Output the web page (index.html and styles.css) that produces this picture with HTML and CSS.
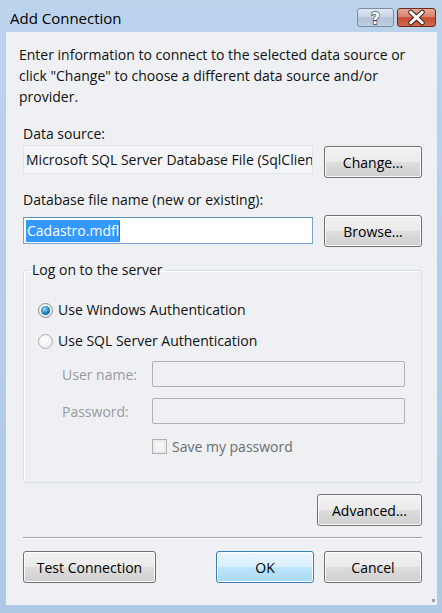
FILE: index.html
```html
<!DOCTYPE html>
<html>
<head>
<meta charset="utf-8">
<link rel="stylesheet" href="styles.css">
</head>
<body>
<div class="window">
  <div class="titlebar">
    <span class="title">Add Connection</span>
    <div class="caption-btns">
      <div class="cbtn help">
        <svg width="36" height="18" viewBox="0 0 36 18">
          <text x="18" y="15" text-anchor="middle" class="qmark">?</text>
        </svg>
      </div>
      <div class="cbtn close">
        <svg width="38" height="19" viewBox="0 0 38 19">
          <path d="M13 4 L25 15 M25 4 L13 15" stroke="#3b1a14" stroke-width="5" stroke-linecap="round"/>
          <path d="M13 4 L25 15 M25 4 L13 15" stroke="#ffffff" stroke-width="3" stroke-linecap="round"/>
        </svg>
      </div>
    </div>
  </div>
  <div class="client">
    <p class="intro">Enter information to connect to the selected data source or click "Change" to choose a different data source and/or provider.</p>
    <div class="label">Data source:</div>
    <div class="row">
      <div class="field readonly">Microsoft SQL Server Database File (SqlClient)</div>
      <button class="btn">Change...</button>
    </div>
    <div class="label label2">Database file name (new or existing):</div>
    <div class="row row2">
      <div class="field active"><span class="sel">Cadastro.mdfl</span><span class="caret"></span></div>
      <button class="btn">Browse...</button>
    </div>
    <fieldset class="group">
      <legend>Log on to the server</legend>
      <div class="radio-row">
        <span class="radio checked"><span class="dot"></span></span>
        <span>Use Windows Authentication</span>
      </div>
      <div class="radio-row second">
        <span class="radio"></span>
        <span>Use SQL Server Authentication</span>
      </div>
      <div class="cred-row">
        <span class="cred-label">User name:</span>
        <div class="cred-field"></div>
      </div>
      <div class="cred-row">
        <span class="cred-label">Password:</span>
        <div class="cred-field"></div>
      </div>
      <div class="check-row">
        <span class="checkbox"></span>
        <span>Save my password</span>
      </div>
    </fieldset>
    <div class="adv-row">
      <button class="btn adv">Advanced...</button>
    </div>
    <div class="separator"></div>
    <div class="footer">
      <button class="btn test">Test Connection</button>
      <div class="footer-right">
        <button class="btn ok">OK</button>
        <button class="btn">Cancel</button>
      </div>
    </div>
    <span class="grip"></span>
  </div>
</div>
</body>
</html>
```

FILE: styles.css
```css
html, body {
  margin: 0;
  padding: 0;
}
body {
  background: #b7cde9;
  font-family: "Open Sans", "Noto Sans", sans-serif;
  font-size: 14px;
  color: #111;
}
.window {
  width: 442px;
  height: 613px;
  background: linear-gradient(#bcd3ec, #afc8e6);
}
.titlebar {
  height: 32px;
  display: flex;
  align-items: flex-start;
  justify-content: space-between;
}
.title {
  font-size: 15px;
  margin: 8px 0 0 10px;
  line-height: 20px;
  color: #000;
}
.caption-btns {
  display: flex;
  gap: 3px;
  margin: 8px 6px 0 0;
}
.cbtn {
  height: 19px;
  border: 1px solid #5f6f86;
  border-radius: 3px;
  box-sizing: border-box;
  display: flex;
  align-items: center;
  justify-content: center;
}
.cbtn svg { display: block; }
.help {
  width: 37px;
  background: linear-gradient(#dfe7f1 0%, #c6d3e4 48%, #b1c1d8 52%, #bfd0e6 100%);
  border-color: #7a8ba3;
}
.qmark {
  font-family: "DejaVu Sans", sans-serif;
  font-weight: bold;
  font-size: 16px;
  fill: #ffffff;
  stroke: #3d4a5e;
  stroke-width: 1.4;
  paint-order: stroke;
}
.close {
  width: 39px;
  background: linear-gradient(#e8a897 0%, #d7826f 45%, #c54c33 52%, #d0684c 100%);
  border-color: #6d2b20;
}
.client {
  position: relative;
  margin: 0 5px 0 6px;
  height: 573px;
  box-sizing: border-box;
  background: #eef0f4;
  padding: 0 15px 0 17px;
  overflow: hidden;
}
.intro {
  margin: 12px 0 0 -4px;
  line-height: 21px;
  font-size: 14px;
}
.label {
  margin-top: 17px;
  line-height: 20px;
}
.label2 {
  margin-top: 12px;
}
.row {
  display: flex;
  justify-content: space-between;
  align-items: flex-start;
  margin-top: 1px;
}
.row2 {
  margin-top: 6px;
}
.field {
  width: 290px;
  box-sizing: border-box;
  white-space: nowrap;
  overflow: hidden;
  display: flex;
  align-items: center;
}
.readonly {
  height: 29px;
  border: 1px solid #e2e3ea;
  background: #f4f5f8;
  padding-left: 2px;
}
.active {
  height: 27px;
  margin-top: 1px;
  border: 1px solid #7da2ce;
  border-top-color: #5794bf;
  background: #ffffff;
  padding-left: 2px;
}
.sel {
  background: #3399ff;
  color: #fff;
  padding: 1px 1px 2px 1px;
}
.caret {
  width: 1px;
  height: 18px;
  background: #c05000;
  margin-left: -1px;
}
.btn {
  font-family: inherit;
  font-size: 14px;
  color: #000;
  width: 98px;
  height: 32px;
  border: 1px solid #707070;
  border-radius: 3px;
  background: linear-gradient(#f2f2f2 0%, #ebebeb 48%, #dddddd 52%, #cfcfcf 100%);
  box-shadow: inset 0 0 0 1px #fcfcfc;
  padding: 0;
  margin: 0;
}
.row .btn { margin-top: 1px; }
.row2 .btn { margin-top: -1px; }
.group {
  margin: 13px 0 0 0;
  padding: 0;
  height: 223px;
  box-sizing: border-box;
  border: 1px solid #d5dfe5;
  border-radius: 3px;
  box-shadow: inset 1px 1px 0 #fff;
}
.group legend {
  margin-left: 5px;
  padding: 0 3px;
  line-height: 20px;
}
.radio-row {
  display: flex;
  align-items: center;
  gap: 5px;
  margin: 20px 0 0 14px;
  line-height: 20px;
}
.radio-row.second {
  margin-top: 11px;
}
.radio {
  width: 13px;
  height: 13px;
  border-radius: 50%;
  border: 1px solid #8e8f8f;
  background: radial-gradient(circle at 40% 35%, #ffffff, #dcdcdc);
  display: flex;
  align-items: center;
  justify-content: center;
}
.radio-row.second .radio {
  border-color: #b1b1b1;
  background: radial-gradient(circle at 40% 35%, #ffffff, #e6e6e6);
}
.dot {
  width: 9px;
  height: 9px;
  border-radius: 50%;
  background: radial-gradient(circle at 40% 35%, #9fe4ff, #1a7ab8 55%, #0d3d66);
}
.cred-row {
  display: flex;
  align-items: center;
  margin: 10px 0 0 38px;
  color: #9a9a9a;
}
.cred-row + .cred-row { margin-top: 11px; }
.cred-label {
  width: 90px;
}
.cred-field {
  width: 253px;
  height: 26px;
  box-sizing: border-box;
  border: 1px solid #adb2b5;
  border-radius: 2px;
  background: #eef0f4;
}
.check-row {
  display: flex;
  align-items: center;
  gap: 5px;
  margin: 13px 0 0 128px;
  color: #6d6d6d;
}
.checkbox {
  width: 15px;
  height: 15px;
  box-sizing: border-box;
  border: 1px solid #b1b1b1;
  background: #f4f4f4;
  box-shadow: inset 0 0 0 2px #eaeaea;
}
.adv-row {
  display: flex;
  justify-content: flex-end;
  margin-top: 11px;
}
.adv {
  width: 105px;
}
.separator {
  margin-top: 11px;
  height: 1px;
  background: #a0a0a0;
  border-bottom: 1px solid #ffffff;
}
.footer {
  display: flex;
  justify-content: space-between;
  margin-top: 12px;
}
.test {
  width: 133px;
}
.footer-right {
  display: flex;
  gap: 10px;
}
.ok {
  width: 98px;
  border-color: #3c7fb1;
  background: linear-gradient(#eaf6fd 0%, #d9f0fc 48%, #bee6fd 52%, #a7d9f5 100%);
}
.grip {
  position: absolute;
  right: 2px;
  bottom: 3px;
  width: 3px;
  height: 3px;
  background: #a0a0a0;
}
```
